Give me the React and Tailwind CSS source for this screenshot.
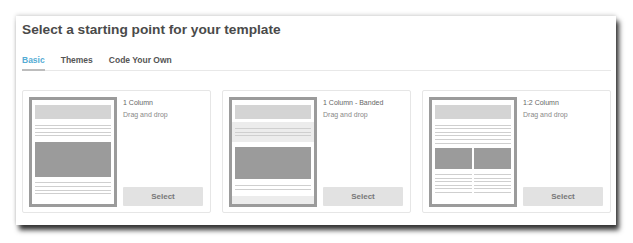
import React from 'react';

const Lines = ({ ys, x = 6, w = 76 }) =>
    ys.map((y) => <rect key={`${x}-${y}`} x={x} y={y} width={w} height="1" fill="#cfcfcf" />);

const Frame = ({ children }) => (
    <svg width="88" height="110" viewBox="0 0 88 110" className="block shrink-0">
        <rect x="0" y="0" width="88" height="110" fill="#9b9b9b" />
        <rect x="3" y="3" width="82" height="104" fill="#ffffff" />
        {children}
    </svg>
);

const OneColumn = () => (
    <Frame>
        <rect x="6" y="8" width="76" height="14" fill="#d4d4d4" />
        <Lines ys={[28, 31, 35, 38]} />
        <rect x="6" y="45" width="76" height="35" fill="#9b9b9b" />
        <Lines ys={[85, 89, 93, 96]} />
    </Frame>
);

const Banded = () => (
    <Frame>
        <rect x="6" y="8" width="76" height="14" fill="#d4d4d4" />
        <rect x="3" y="25" width="82" height="20" fill="#ececec" />
        <Lines ys={[31, 35, 38]} />
        <rect x="6" y="50" width="76" height="32" fill="#9b9b9b" />
        <Lines ys={[88, 92]} />
        <rect x="3" y="99" width="82" height="8" fill="#ececec" />
    </Frame>
);

const TwoColumn = () => (
    <Frame>
        <rect x="6" y="8" width="76" height="14" fill="#d4d4d4" />
        <Lines ys={[28, 31, 35, 38, 42, 46]} />
        <rect x="6" y="51" width="37" height="21" fill="#9b9b9b" />
        <rect x="45" y="51" width="37" height="21" fill="#9b9b9b" />
        <Lines ys={[77, 81, 84, 88, 91, 95]} x={6} w={37} />
        <Lines ys={[77, 81, 84, 88, 91, 95]} x={45} w={37} />
    </Frame>
);

const templates = [
    { name: '1 Column', thumb: OneColumn },
    { name: '1 Column - Banded', thumb: Banded },
    { name: '1:2 Column', thumb: TwoColumn },
];

const TemplateCard = ({ name, thumb: Thumb }) => (
    <div className="w-[189px] h-[123px] border border-[#e6e6e6] rounded-[2px] flex gap-[6px] pl-[6px] pr-[7px] pt-[6px]">
        <Thumb />
        <div className="flex-1 flex flex-col pt-[1px] pb-[6px] antialiased">
            <p className="text-[7px] leading-[9px] text-[#666]">{name}</p>
            <p className="text-[7px] leading-[9px] text-[#888] mt-[3px]">Drag and drop</p>
            <button className="mt-auto h-[19px] w-full bg-[#e2e2e2] rounded-[1px] text-[8px] font-bold text-[#777]">
                Select
            </button>
        </div>
    </div>
);

export default function App() {
    return (
        <div className="w-[633px] h-[243px] bg-white pt-[16px] pl-[16px] font-['Liberation_Sans',Arial,sans-serif]">
            <div className="w-[600px] h-[209px] bg-white shadow-[3px_5px_5px_rgba(0,0,0,0.8),0_-1px_4px_rgba(0,0,0,0.18)] pl-[6px] pr-[5px]">
                <h1 className="pt-[5px] text-[13.7px] leading-[18px] font-bold text-[#4a4a4a]">
                    Select a starting point for your template
                </h1>

                {/* Tabs */}
                <div className="mt-[16px] flex gap-[16px] border-b border-[#e8e8e8] text-[8.5px] font-bold leading-[10px]">
                    <span className="text-[#55acd4] pb-[4px] border-b-2 border-[#bdbdbd] -mb-px">Basic</span>
                    <span className="text-[#555] pb-[4px]">Themes</span>
                    <span className="text-[#555] pb-[4px]">Code Your Own</span>
                </div>

                <div className="mt-[19px] flex gap-[11px]">
                    {templates.map((t) => (
                        <TemplateCard key={t.name} {...t} />
                    ))}
                </div>
            </div>
        </div>
    );
}
